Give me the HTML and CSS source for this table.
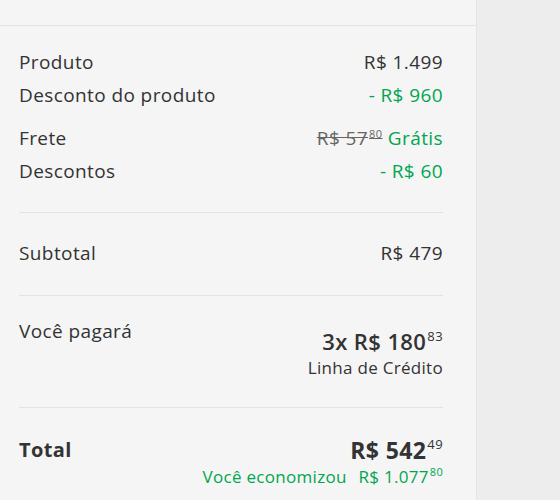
FILE: index.html
```html
<!DOCTYPE html>
<html lang="pt-BR">
<head>
    <meta charset="UTF-8">
    <meta name="viewport" content="width=device-width, initial-scale=1.0">
    <title>Resumo da compra</title>
    <link rel="stylesheet" href="styles.css">
</head>
<body>
    <aside class="summary">
        <header class="summary-header"></header>
        <div class="summary-body">
            <section class="block block-items">
                <div class="row">
                    <span>Produto</span>
                    <span>R$ 1.499</span>
                </div>
                <div class="row">
                    <span>Desconto do produto</span>
                    <span class="green">- R$ 960</span>
                </div>
                <div class="row row-gap">
                    <span>Frete</span>
                    <span><s class="old">R$ 57<sup>80</sup></s> <span class="green">Grátis</span></span>
                </div>
                <div class="row">
                    <span>Descontos</span>
                    <span class="green">- R$ 60</span>
                </div>
            </section>
            <section class="block block-subtotal">
                <div class="row">
                    <span>Subtotal</span>
                    <span>R$ 479</span>
                </div>
            </section>
            <section class="block block-pay">
                <div class="row row-top">
                    <span class="pay-label">Você pagará</span>
                    <div class="pay-value">
                        <div class="installments">3x R$ 180<sup>83</sup></div>
                        <div class="method">Linha de Crédito</div>
                    </div>
                </div>
            </section>
            <section class="block block-total">
                <div class="row total-row">
                    <span>Total</span>
                    <span class="total-price">R$ 542<sup>49</sup></span>
                </div>
                <div class="saved green">Você economizou <span class="saved-value">R$ 1.077<sup>80</sup></span></div>
            </section>
        </div>
    </aside>
</body>
</html>
```

FILE: styles.css
```css
body {
    font-family: 'Open Sans', sans-serif;
    margin: 0;
    padding: 0;
    background-color: #ededed;
    color: #333333;
    letter-spacing: 0.4px;
}
.summary {
    width: 476px;
    min-height: 500px;
    background-color: #f5f5f5;
    border-right: 1px solid #e6e6e6;
}
.summary-header {
    height: 25px;
    border-bottom: 1px solid #e3e3e3;
}
.summary-body {
    padding: 0 33px 0 19px;
}
.block {
    border-bottom: 1px solid #e3e3e3;
}
.block:last-child {
    border-bottom: none;
}
.row {
    display: flex;
    justify-content: space-between;
    align-items: center;
    font-size: 19px;
    line-height: 33px;
}
.row-top {
    align-items: flex-start;
}
.row-gap {
    margin-top: 10px;
}
.green {
    color: #00a650;
}
.old {
    color: #666666;
}
sup {
    font-size: 11px;
    vertical-align: 7px;
    line-height: 0;
    margin-left: 1px;
}
.block-items {
    padding: 20px 0 24px;
}
.block-subtotal {
    padding: 24px 0 25px;
}
.block-pay {
    padding: 23px 0 28px;
}
.pay-label {
    line-height: 24px;
}
.pay-value {
    text-align: right;
    padding-top: 6px;
}
.installments {
    font-size: 22px;
    font-weight: 600;
    line-height: 32px;
}
.installments sup {
    font-size: 13px;
    font-weight: 400;
    vertical-align: 9px;
}
.method {
    font-size: 17px;
    line-height: 22px;
    letter-spacing: 0.3px;
}
.block-total {
    padding: 25px 0 10px;
}
.total-row {
    font-size: 20px;
    font-weight: 700;
    line-height: 34px;
}
.total-price {
    font-size: 23px;
}
.total-row sup {
    font-size: 13px;
    font-weight: 400;
    vertical-align: 10px;
}
.saved {
    text-align: right;
    font-size: 17px;
    line-height: 20px;
    letter-spacing: 0.3px;
}
.saved-value {
    margin-left: 7px;
}
```
